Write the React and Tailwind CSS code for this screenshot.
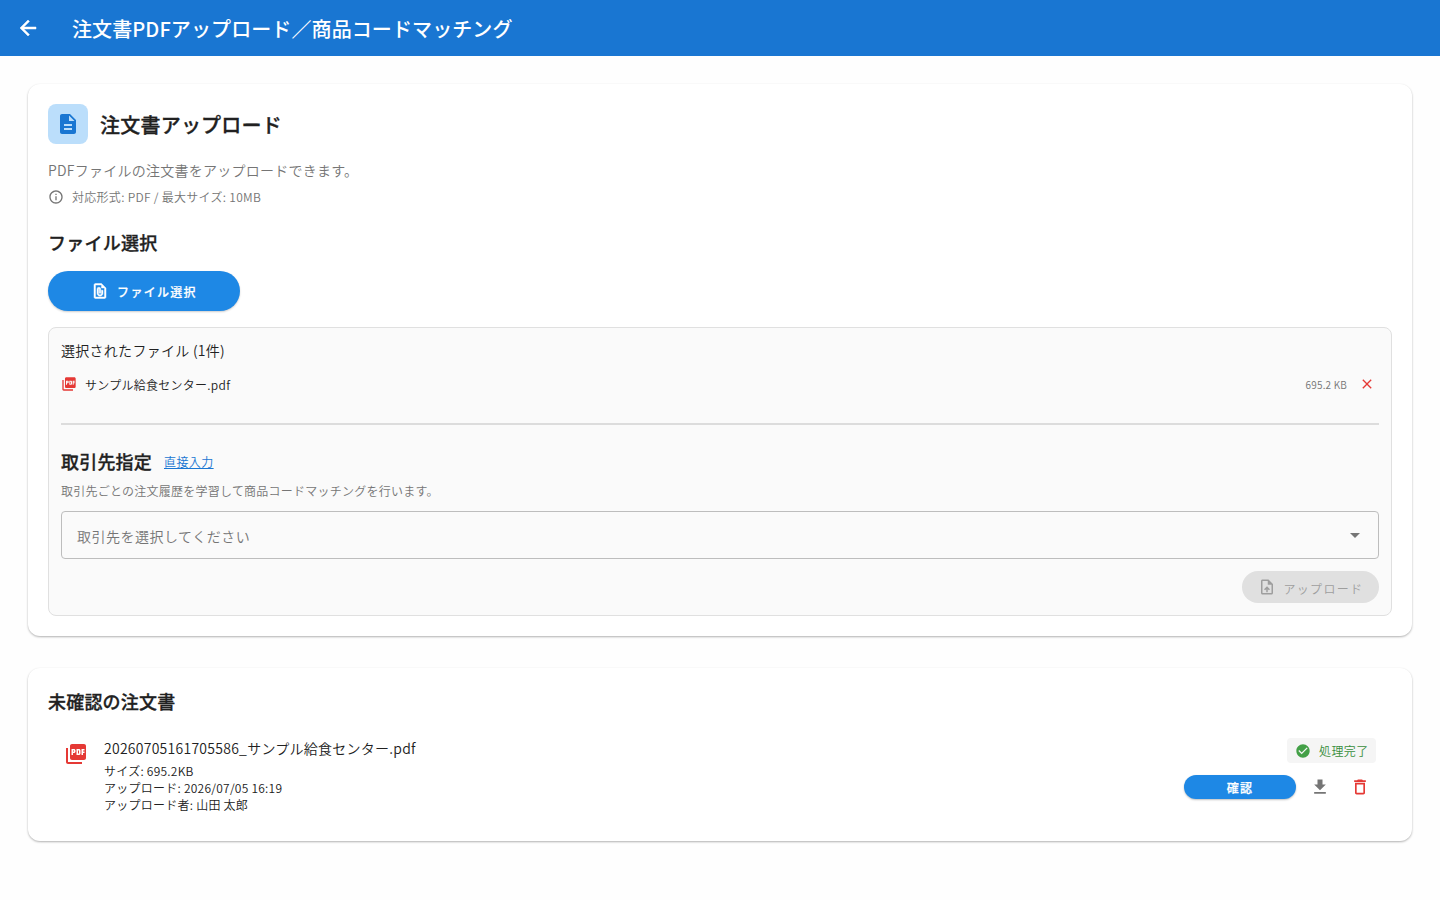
import React from 'react';
import {
  MdArrowBack,
  MdArrowDropDown,
  MdCheckCircle,
  MdClose,
  MdDeleteOutline,
  MdDescription,
  MdDownload,
  MdInfoOutline,
  MdOutlineFilePresent,
  MdOutlineUploadFile,
  MdPictureAsPdf,
} from 'react-icons/md';

const selectedFiles = [{ name: 'サンプル給食センター.pdf', size: '695.2 KB' }];

const pendingOrders = [
  {
    name: '20260705161705586_サンプル給食センター.pdf',
    size: '695.2KB',
    uploadedAt: '2026/07/05 16:19',
    uploadedBy: '山田 太郎',
  },
];

function AppBar() {
  return (
    <header className="flex h-14 items-center bg-[#1976d2] pl-4 text-white">
      <button className="flex size-6 items-center justify-center">
        <MdArrowBack className="size-6 stroke-current stroke-[0.5] [&>path:first-child]:stroke-none" />
      </button>
      <h1 className="ml-8 pt-0.5 text-[20px] leading-7 font-medium tracking-[0.1px]">
        注文書PDFアップロード／商品コードマッチング
      </h1>
    </header>
  );
}

function Card({ className, children }) {
  return (
    <section
      className={`mx-7 rounded-xl bg-white px-5 shadow-[0_1px_2px_0_rgba(0,0,0,0.24),0_1px_3px_0_rgba(0,0,0,0.08)] ${className}`}
    >
      {children}
    </section>
  );
}

function SelectedFileRow({ file }) {
  return (
    <div className="flex h-8 items-center">
      <MdPictureAsPdf className="size-4 text-[#e53935]" />
      <span className="ml-2 pt-0.5 text-[12px] tracking-[0.27px]">{file.name}</span>
      <span className="mr-3 ml-auto text-[10px] tracking-[0.2px] text-[#757575]">{file.size}</span>
      <button className="mr-1 flex size-4 items-center justify-center text-[#e53935]">
        <MdClose className="size-4" />
      </button>
    </div>
  );
}

function UploadPanel() {
  return (
    <div className="mt-4 h-[289px] rounded-lg border border-[#e0e0e0] bg-[#fafafa] px-3 pt-3">
      <p className="text-[14px] leading-5 tracking-[0.28px]">選択されたファイル (1件)</p>
      <div className="mt-2 pb-[23px]">
        {selectedFiles.map((file) => (
          <SelectedFileRow key={file.name} file={file} />
        ))}
      </div>
      <hr className="h-0.5 border-0 bg-[#dcdcdc]" />

      <div className="mt-[22px] flex h-7 items-center">
        <h3 className="text-[18px] leading-7 font-medium tracking-[0.2px] [-webkit-text-stroke:0.3px_currentColor]">
          取引先指定
        </h3>
        <a className="ml-3 pt-0.5 text-[12px] leading-5 tracking-[0.4px] text-[#1976d2] underline">直接入力</a>
      </div>
      <p className="mt-1.5 text-[12px] leading-5 tracking-[0.24px] text-[#757575]">
        取引先ごとの注文履歴を学習して商品コードマッチングを行います。
      </p>
      <button className="mt-2.5 flex h-12 w-full items-center justify-between rounded border border-[#bdbdbd] pr-[11px] pl-[15px]">
        <span className="pt-0.5 text-[14px] tracking-[0.5px] text-[#757575]">取引先を選択してください</span>
        <MdArrowDropDown className="size-6 text-[#757575]" />
      </button>
      <div className="mt-3 flex justify-end">
        <button
          disabled
          className="flex h-8 w-[137.5px] items-center rounded-full bg-[#e0e0e0] pl-4 text-[#9e9e9e]"
        >
          <MdOutlineUploadFile className="size-[18px]" />
          <span className="ml-2 pt-[3px] text-[12px] tracking-[1.3px]">アップロード</span>
        </button>
      </div>
    </div>
  );
}

function OrderRow({ order }) {
  return (
    <div className="mt-[13px] flex px-4">
      <MdPictureAsPdf className="mt-3.5 size-6 text-[#e53935]" />
      <div className="ml-4">
        <p className="mt-2.5 text-[14px] leading-5 tracking-[0.26px]">{order.name}</p>
        <div className="mt-1 text-[12px] leading-[17px] tracking-[0.25px]">
          <p>サイズ: {order.size}</p>
          <p>アップロード: {order.uploadedAt}</p>
          <p>アップロード者: {order.uploadedBy}</p>
        </div>
      </div>
      <div className="ml-auto flex flex-col items-end pt-2.5">
        <div className="flex h-[25px] w-[89px] items-center rounded bg-[#f5f5f5] pl-2">
          <MdCheckCircle className="size-4 text-[#43a047]" />
          <span className="ml-2 pt-px text-[12px] tracking-[0.4px] text-[#388e3c]">処理完了</span>
        </div>
        <div className="mt-3 flex h-6 items-center">
          <button className="h-6 w-28 rounded-full bg-[#1e88e5] pt-0.5 text-[12px] font-medium tracking-[1.25px] text-white shadow-[0_1px_2px_rgba(0,0,0,0.25)] [-webkit-text-stroke:0.25px_currentColor]">
            確認
          </button>
          <MdDownload className="ml-3.5 size-5 text-[#757575]" />
          <MdDeleteOutline className="mr-1.5 ml-5 size-5 text-[#e53935]" />
        </div>
      </div>
    </div>
  );
}

export default function App() {
  return (
    <div className="h-[900px] overflow-hidden bg-[#fefefe] font-['Noto_Sans_CJK_JP',sans-serif] font-[350] text-[#212121]">
      <AppBar />

      <Card className="mt-7 h-[552px] pt-5">
        <div className="flex h-10 items-center">
          <div className="flex size-10 items-center justify-center rounded-lg bg-[#bbdefb]">
            <MdDescription className="size-6 text-[#1976d2]" />
          </div>
          <h2 className="ml-3 pt-0.5 text-[20px] leading-7 font-medium tracking-[0.22px] [-webkit-text-stroke:0.3px_currentColor]">
            注文書アップロード
          </h2>
        </div>
        <p className="mt-4 text-[14px] leading-5 tracking-[0.25px] text-[#757575]">
          PDFファイルの注文書をアップロードできます。
        </p>
        <div className="mt-2 flex h-[18px] items-center text-[#757575]">
          <MdInfoOutline className="size-4" />
          <span className="ml-2 text-[12px] tracking-[0.29px]">対応形式: PDF / 最大サイズ: 10MB</span>
        </div>

        <h3 className="mt-[22px] text-[18px] leading-7 font-medium tracking-[0.25px] [-webkit-text-stroke:0.3px_currentColor]">
          ファイル選択
        </h3>
        <button className="mt-[15px] flex h-10 w-48 items-center justify-center rounded-full bg-[#1e88e5] text-white shadow-[0_1px_2px_rgba(0,0,0,0.2)]">
          <MdOutlineFilePresent className="size-[18px] stroke-current stroke-[0.6] [&>path:first-child]:stroke-none" />
          <span className="ml-2 pt-0.5 text-[12px] font-medium tracking-[1.3px] [-webkit-text-stroke:0.2px_currentColor]">
            ファイル選択
          </span>
        </button>
        <UploadPanel />
      </Card>

      <Card className="mt-8 h-[173px] pt-[19px]">
        <h2 className="text-[18px] leading-7 font-medium tracking-[0.2px] [-webkit-text-stroke:0.3px_currentColor]">
          未確認の注文書
        </h2>
        {pendingOrders.map((order) => (
          <OrderRow key={order.name} order={order} />
        ))}
      </Card>
    </div>
  );
}
